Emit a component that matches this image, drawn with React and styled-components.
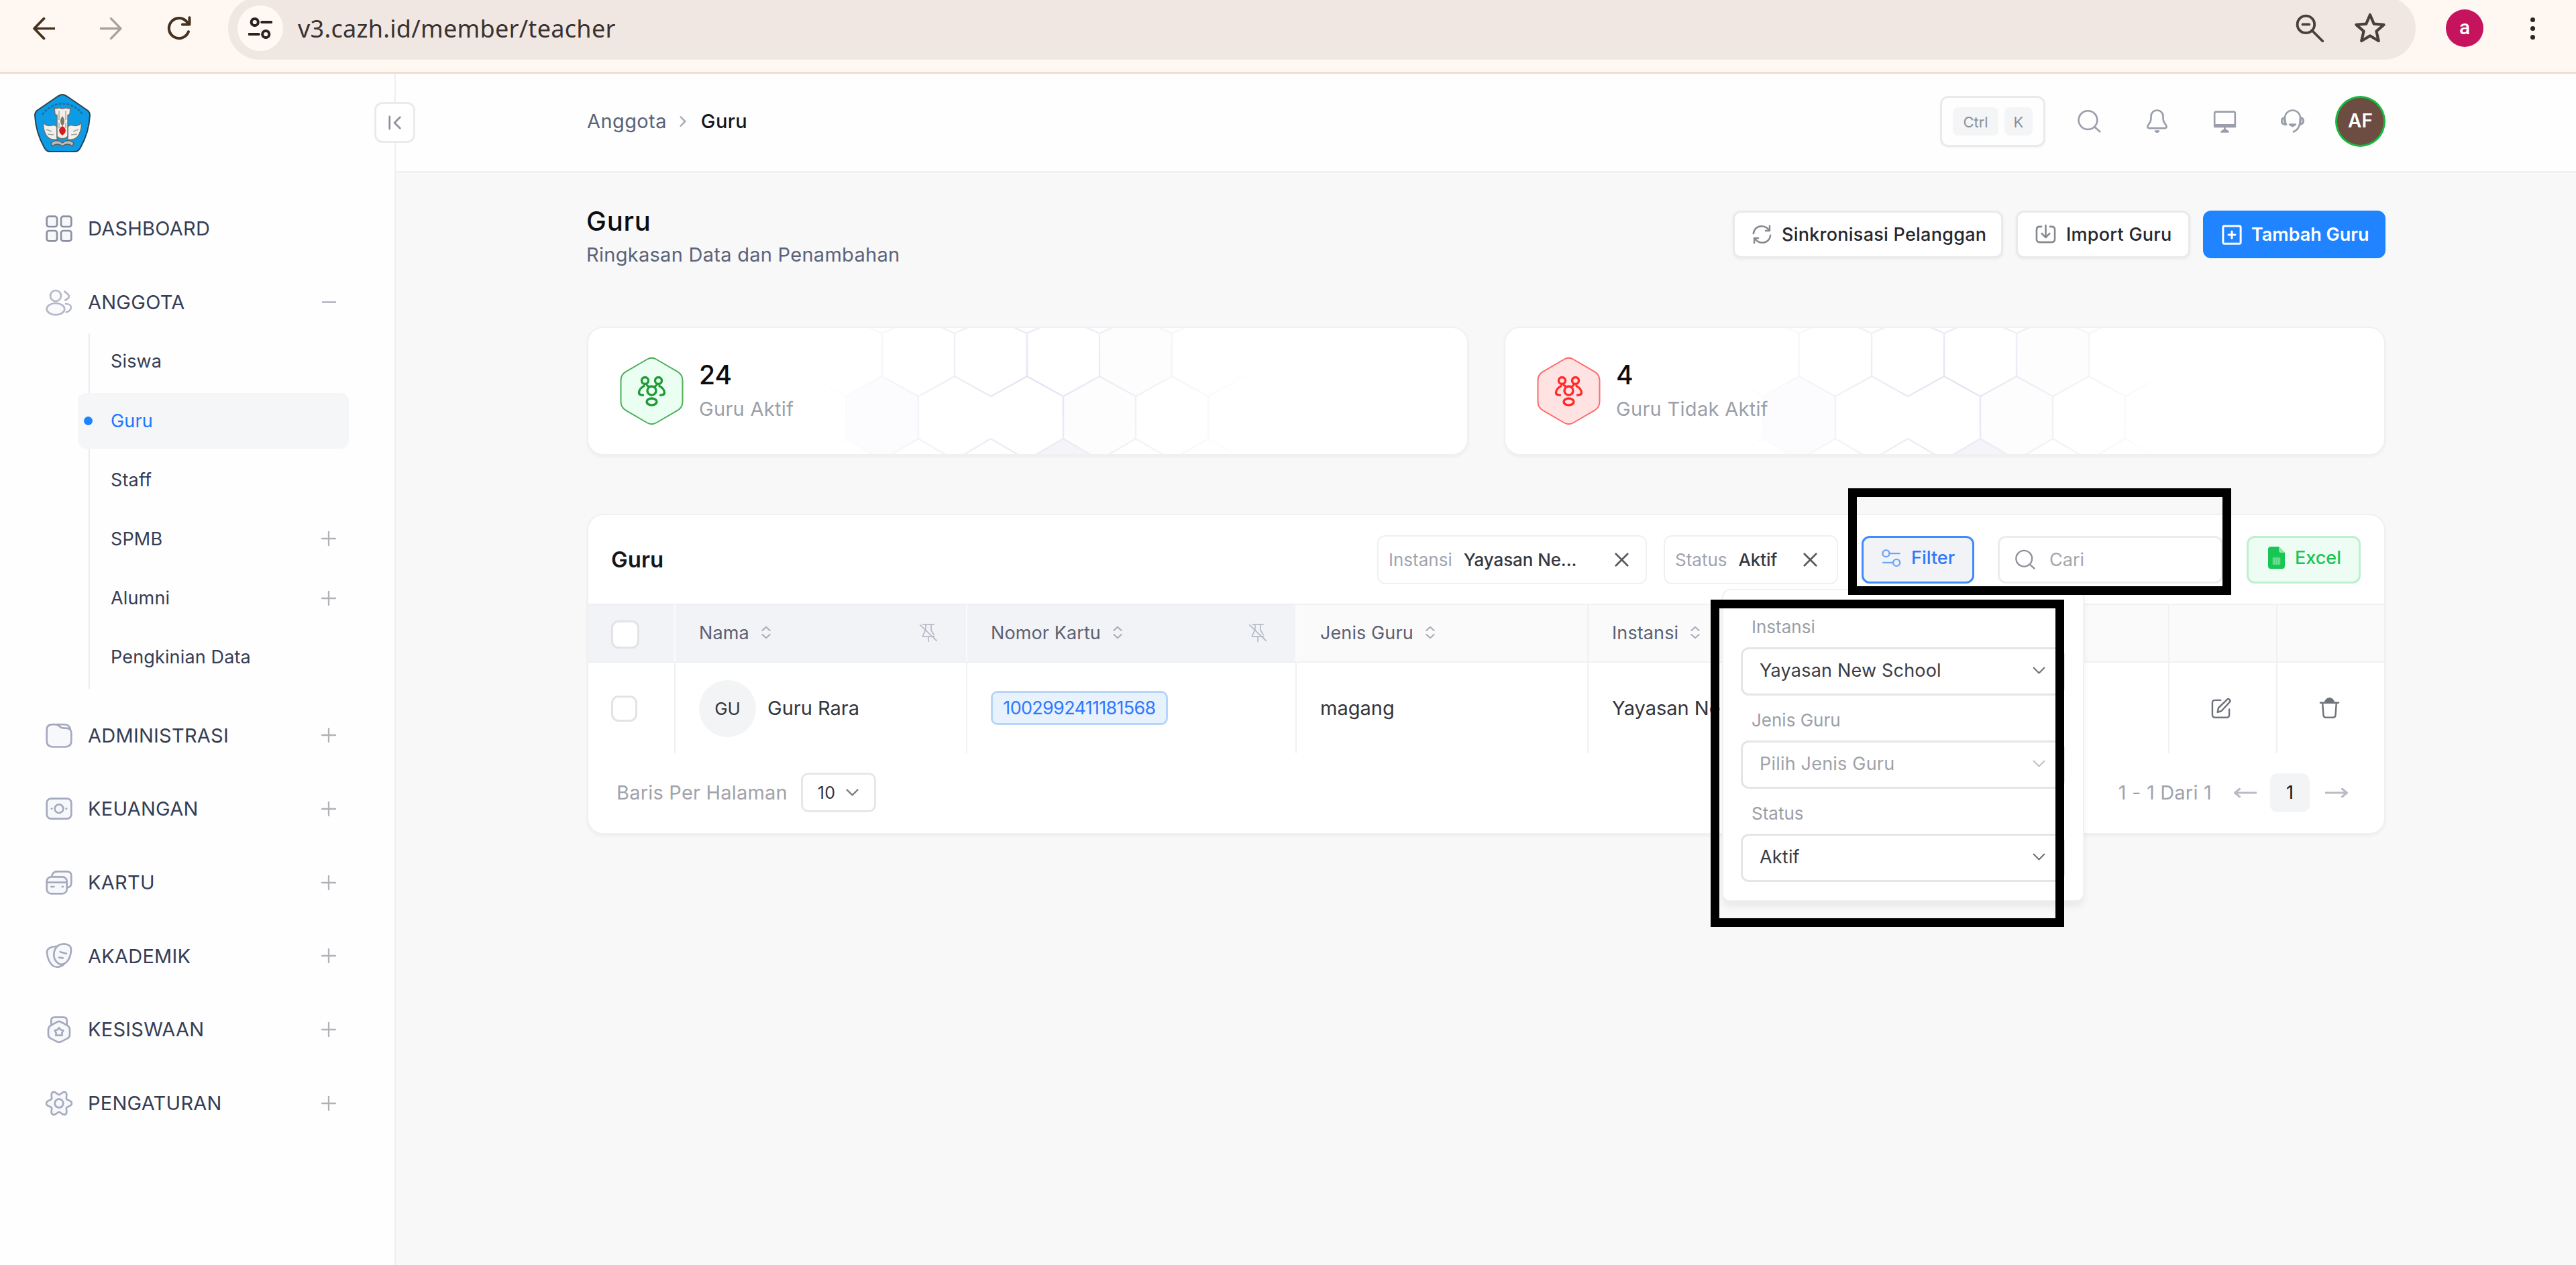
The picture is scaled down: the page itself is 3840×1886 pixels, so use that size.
import React from "react";
import styled, { createGlobalStyle } from "styled-components";

/// data
const menuTop = [{ id: 1, label: "DASHBOARD", icon: "dashboard" }];

const subMenu = [
  { id: 1, label: "Siswa" },
  { id: 2, label: "Guru", active: true },
  { id: 3, label: "Staff" },
  { id: 4, label: "SPMB", more: true },
  { id: 5, label: "Alumni", more: true },
  { id: 6, label: "Pengkinian Data" },
];

const menuBottom = [
  { id: 1, label: "ADMINISTRASI", icon: "folder" },
  { id: 2, label: "KEUANGAN", icon: "money" },
  { id: 3, label: "KARTU", icon: "cards" },
  { id: 4, label: "AKADEMIK", icon: "masks" },
  { id: 5, label: "KESISWAAN", icon: "badge" },
  { id: 6, label: "PENGATURAN", icon: "gear" },
];

const stats = [
  { id: 1, value: "24", label: "Guru Aktif", fill: "#eafff1", line: "#4fae5c", ink: "#1f9a34" },
  { id: 2, value: "4", label: "Guru Tidak Aktif", fill: "#ffe2e2", line: "#ff6b6b", ink: "#ff2a2a" },
];

const filters = [
  { id: 1, label: "Instansi", value: "Yayasan New School" },
  { id: 2, label: "Jenis Guru", value: "Pilih Jenis Guru", empty: true },
  { id: 3, label: "Status", value: "Aktif" },
];

const tools = ["search", "bell", "monitor", "headset"];

// six rounded teeth, one of them pointing straight to the right
function gearPath() {
  const points = [];
  for (let i = 0; i < 72; i++) {
    const a = (i / 72) * Math.PI * 2;
    const r = 9.6 + 1.9 * Math.cos(6 * a);
    points.push(`${(12 + r * Math.cos(a)).toFixed(2)} ${(12 + r * Math.sin(a)).toFixed(2)}`);
  }
  return `M${points.join("L")}z`;
}

/// icons
const shapes = {
  dashboard: (
    <>
      <rect x="1" y="1" width="9.2" height="9.2" rx="2" />
      <rect x="13.8" y="1" width="9.2" height="9.2" rx="2" />
      <rect x="1" y="13.8" width="9.2" height="9.2" rx="2" />
      <rect x="13.8" y="13.8" width="9.2" height="9.2" rx="2" />
    </>
  ),
  people: (
    <>
      <circle cx="9" cy="6" r="4.8" />
      <ellipse cx="9" cy="17.800" rx="8" ry="5.200" />
      <path d="M17 2.200c2.600 2 4 3.600 4 4.300s-1.400 2.300-3.500 3.500" fill="none" />
      <path d="M18 13.200c2.700 0 4.800 1.200 4.800 3.200s-2 3.700-4.300 4.300" fill="none" />
    </>
  ),
  folder: (
    <>
      <path d="M1 7.500C1 4 2.500 2.500 6 2.500h2.500c2 0 2.800.5 4 1.700 1.200 1.200 2.200 1.600 4 1.600h2c3 0 4.500 1.600 4.500 4.600v6.600c0 3.700-1.800 5.500-5.500 5.500h-11C2.800 22.500 1 20.700 1 17z" />
      <path d="M10 2.500h6.500c3 0 4.800 1.200 5.500 3.800" fill="none" />
    </>
  ),
  money: (
    <>
      <rect x="1" y="2.800" width="22" height="18" rx="3.800" />
      <circle cx="12" cy="11.800" r="3.800" />
      <path d="M5.300 11.800h.3M18.400 11.800h.3" />
    </>
  ),
  cards: (
    <>
      <path d="M5.500 6.500C6 3.300 7.500 2 10 2h9c2.600 0 4 1.400 4 3.800v6.400c0 2.600-1.500 4.200-4 4.200" />
      <rect x="1" y="6.800" width="18" height="15" rx="4" />
      <path d="M1 11.800h18M5 15.600h2.500M14.800 15.600h.8" />
    </>
  ),
  masks: (
    <>
      <path d="M9 3.600C4 4 .8 5.800 1.200 9.200 1.700 14 3.300 18 6 20.500c2.700 2.400 7.300 2 10.800-1.300" />
      <path d="M10.500 3.300c1.500-1.600 5.500-2.300 8.500-1.500 3 .8 4 2.300 3.800 5-.2 4.700-1.500 8.400-4.500 11.200-2.600 2.300-6 2.200-8.500-.5-2.400-2.500-2.900-5.500-2.100-9.200.4-2 1.300-3.500 2.800-5z" />
      <path d="m13 8.500 5.500 1.500M12 13.500l3.500.5" />
    </>
  ),
  badge: (
    <>
      <path d="M5 7.500V3.800C5 2 6 1 7.800 1h8.400C18 1 19 2 19 3.800v3.700" />
      <path d="M10 5.300c1.400-.8 2.600-.8 4 0l5.600 3.200c1.300.8 2 1.800 2 3.300v4.700c0 1.500-.7 2.600-2 3.400L14 22.700c-1.400.8-2.600.8-4 0l-5.600-2.800c-1.300-.8-2-1.900-2-3.400v-4.700c0-1.500.7-2.500 2-3.300z" />
      <path d="m12 10.500 1.500 1.700 2.300.6-1.200 2.200.2 2.200H9.200l.2-2.200-1.200-2.200 2.300-.6z" />
    </>
  ),
  gear: (
    <>
      <path d={gearPath()} />
      <circle cx="12" cy="12" r="3.800" />
    </>
  ),
  plus: <path d="M12 1v22M1 12h22" />,
  minus: <path d="M1 12h22" />,
  search: (
    <>
      <circle cx="10.600" cy="11" r="9.500" />
      <path d="m18 18.500 4.800 4.300" />
    </>
  ),
  bell: (
    <>
      <path d="M12 1c-3.700 0-6.200 2.700-6.200 6.200v2.400c0 1.300-.4 2.600-1.100 3.800L2.700 16.500c-.9 1.500-.2 2.800 1.500 2.800h15.600c1.700 0 2.400-1.300 1.500-2.800l-2-3.100c-.7-1.200-1.100-2.500-1.100-3.800V7.200C18.200 3.700 15.700 1 12 1z" />
      <path d="M10.300 22.400h3.400l-1.700.9z" fill="currentColor" />
    </>
  ),
  monitor: (
    <>
      <path d="M1.500 15.500V4c0-1 .5-1.500 1.500-1.500h18c1 0 1.500.5 1.500 1.500v11.500" />
      <path d="M1.500 16h21v1.800h-21z" fill="currentColor" />
      <path d="M12 18v4M8.500 23h7l-2-1.500h-3z" fill="currentColor" />
    </>
  ),
  headset: (
    <>
      <path d="M5.500 15.500C4.300 13.500 4 11.500 4 9.500 4 4.500 7.500 1 12 1s8 3.500 8 8.500c0 7-2 11.500-7 13.500" />
      <path d="M4 8.500c-2 .3-3.200 1.700-3.200 3.700s1.500 3.300 4 3.500zM20 8.500c2 .3 3.200 1.700 3.200 3.500s-1.300 3-3.700 3.500z" fill="currentColor" fillOpacity=".5" />
      <path d="M9 15.500h6l-3 1.800z" fill="currentColor" />
    </>
  ),
  sync: (
    <>
      <path d="M1.500 11C2 5.500 6.200 1.800 11.500 1.800c4 0 7.300 2 9.500 5.200M22.500 13c-.5 5.500-4.700 9.200-10 9.200-4 0-7.300-2-9.500-5.200" />
      <path d="M21.500 1.500V7.500h-5M2.500 22.500v-6h5" />
    </>
  ),
  download: (
    <>
      <path d="M7 3H5C2.600 3 1.500 4.200 1.500 6.500v11C1.500 20 2.600 21 5 21h14c2.400 0 3.500-1 3.500-3.500v-11C22.500 4.200 21.400 3 19 3h-2" />
      <path d="M12 1.500v13.500M7.500 11l4.500 4.500 4.500-4.500" />
    </>
  ),
  addBox: (
    <>
      <rect x="1.500" y="1.500" width="21" height="21" rx="1.500" />
      <path d="M12 8v8M8 12h8" />
    </>
  ),
  sliders: (
    <>
      <circle cx="6" cy="6.500" r="4" />
      <circle cx="18.500" cy="17.500" r="4" />
      <path d="M10 6.500h12M2.500 17.500h12" />
    </>
  ),
  close: <path d="M2 2l20 20M22 2 2 22" />,
  sort: <path d="m4.500 8 7.500-7 7.500 7M4.500 16l7.500 7 7.500-7" />,
  pinOff: (
    <>
      <path d="M5 1.500h14M8.500 2v6L4.500 17h15M15.500 2v7l3.500 6M12 17v6.500M1.500 2.500l21 20" />
    </>
  ),
  chevron: <path d="m2 7 10 10L22 7" />,
  right: <path d="m8 4 8 8-8 8" />,
  edit: (
    <>
      <path d="M11 3H4.500C2.500 3 1.500 4 1.500 6v14c0 2 1 3 3 3h13.500c2 0 3-1 3-3v-6.500" />
      <path d="M19 1.800c1.200-.8 3.700 1.200 3 2.800L12 15.500l-4.500 1.500 1-5z" />
    </>
  ),
  trash: (
    <>
      <path d="M1.500 6h21M4 6l1 14c.1 2 1 3 3 3h8c2 0 2.900-1 3-3l1-14" />
      <path d="M7 5.500C8 2.500 9.500 1 12 1s4 1.500 5 4.500z" fill="currentColor" />
    </>
  ),
  arrowLeft: <path d="M1 12h23M6 8l-5 4 5 4" />,
  arrowRight: <path d="M0 12h23M18 8l5 4-5 4" />,
  collapse: <path d="M3 2v20M20 3l-9 9 9 9" />,
  back: <path d="M23.500 12H2M12 1.200 1.500 12 12 22.800" />,
  forward: <path d="M.5 12H22M12 1.200 22.500 12 12 22.800" />,
  reload: (
    <>
      <path d="M21.300 15.500A10 10 0 1 1 19 5l3 2.800" />
      <path d="M22.300 1.500v6.800h-7" />
    </>
  ),
  site: (
    <>
      <circle cx="6.500" cy="6" r="3.400" />
      <circle cx="17.500" cy="18" r="3.400" />
      <path d="M13.500 6H23M1 18h9.500" />
    </>
  ),
  zoomOut: (
    <>
      <circle cx="8.800" cy="8.800" r="7.300" />
      <path d="m14 14 9 9M6 8.800h5.600" />
    </>
  ),
  star: <path d="m12 2 2.900 6.800 7.400.6-5.600 4.900 1.700 7.200L12 17.700l-6.400 3.800 1.700-7.200-5.600-4.900 7.400-.6z" />,
};

function Icon({ name, size = 34, weight = 1.5, color, tint }) {
  return (
    <IconSvg
      viewBox="0 0 24 24"
      width={size}
      height={size}
      fill={tint || "none"}
      stroke="currentColor"
      strokeWidth={weight}
      strokeLinecap="round"
      strokeLinejoin="round"
      $color={color}
    >
      {shapes[name]}
    </IconSvg>
  );
}

function SchoolLogo() {
  return (
    <svg width="84" height="87" viewBox="0 0 84 87">
      <path
        d="M42 1c3 0 6 2 9 4l29 20c2 2 3 4 3 7-1 18-6 34-14 48-2 4-4 6-8 6H23c-4 0-6-2-8-6C7 66 2 50 1 32c0-3 1-5 3-7L33 5c3-2 6-4 9-4z"
        fill="#0d9be6"
        stroke="#2b4350"
        strokeWidth="2"
      />
      <path d="M12 31C28 9 56 9 73 31" fill="none" stroke="#1c6f9f" strokeWidth="2.500" strokeDasharray="4 2" />
      {/* wings */}
      <path
        d="M14 42c2 5 7 6 12 5 4-1 7 0 8 3v18c-8 1-14-2-17-8-3-6-4-12-3-18zM70 42c-2 5-7 6-12 5-4-1-7 0-8 3v18c8 1 14-2 17-8 3-6 4-12 3-18z"
        fill="#f3f1ec"
        stroke="#6a7472"
        strokeWidth="1.500"
      />
      <path d="M18 53l8 3M20 60l9 1M66 53l-8 3M64 60l-9 1" stroke="#a5a49a" strokeWidth="1.500" />
      <path
        d="M30 21c3 2 5-1 8 0s5 1 8 0 5 2 8 0l-1 9-3 2v31c-4 5-12 5-16 0V32l-3-2z"
        fill="#f1efe8"
        stroke="#6a7472"
        strokeWidth="1.500"
      />
      <path d="M37 25v14M47 25v14M37 43v8M47 43v8" stroke="#aaa798" strokeWidth="1.500" fill="none" />
      <path d="M42 33c4 5 4 10 0 15-4-5-4-10 0-15z" fill="#7d786a" />
      <path d="M42 48c6 3 7 9 0 14-7-5-6-11 0-14z" fill="#cf1f22" />
      <path d="M25 73c6-5 12-4 17 0 5-4 11-5 17 0l-2 5c-5-4-10-4-15 0-5-4-10-4-15 0z" fill="#b9bdba" stroke="#55605f" strokeWidth="1.500" />
    </svg>
  );
}

function HexBadge({ fill, line, ink }) {
  return (
    <svg width="95" height="102" viewBox="0 0 95 102">
      <path
        d="M41 3.500c4-2.300 9-2.300 13 0l32 18.700c4.500 2.600 7.500 7.600 7.500 13v31.600c0 5.400-3 10.400-7.500 13L54 98.500c-4 2.300-9 2.300-13 0L9 79.800c-4.500-2.600-7.500-7.600-7.500-13V35.200c0-5.400 3-10.400 7.500-13z"
        fill={fill}
        stroke={line}
        strokeWidth="2"
      />
      <g fill="none" stroke={ink} strokeWidth="3.400" strokeLinecap="round">
        <circle cx="37.500" cy="35.500" r="5" />
        <circle cx="57.500" cy="35.500" r="5" />
        <path d="M36 43.500c-4 2-7.500 6-7.500 10 0 2 2 3.500 6 3.500M59 43.500c4 2 7.500 6 7.500 10 0 2-2 3.500-6 3.500M40.500 42.500l2 1.500M54.500 42.500l-2 1.500" />
        <circle cx="47.500" cy="50.500" r="6.500" />
        <ellipse cx="47.500" cy="67" rx="7.500" ry="5" />
      </g>
    </svg>
  );
}

// honeycomb behind the statistic cards, it fades out towards the sides
function Honeycomb({ id }) {
  const pitch = 108;
  let lines = "";
  [-1, 0, 1, 2, 3, 4, 5].forEach((n) => {
    const x = 438 + n * pitch;
    lines += `M${x} 8V72l54 30M${x} 72l-54 30M${x} 8l-22-10M${x} 8l22-10`;
    if (n !== 1) lines += `M${x + 54} 102v63`;
    lines += `M${x + 54} 165l-46 27M${x + 54} 165l46 27`;
  });
  return (
    <Pattern viewBox="0 0 1310 188" width="1310" height="188">
      <defs>
        <radialGradient id={id} gradientUnits="userSpaceOnUse" cx="665" cy="90" r="330">
          <stop offset="0" stopColor="#e4e2f3" />
          <stop offset=".4" stopColor="#efeef6" />
          <stop offset=".75" stopColor="#f8f8fb" />
          <stop offset="1" stopColor="#fff" />
        </radialGradient>
      </defs>
      <path d="M384 102l54-30 54 30v63l-40 23h-28l-40-23z" fill="#fcfcfe" />
      <path d="M762 8l22-10h64l22 10v64l-54 30-54-30z" fill="#fdfdfe" />
      <path d="M708 102l54-30 54 30v63l-40 23h-28l-40-23z" fill="#fdfdfe" />
      <path d="M708 165l40 23h-80z" fill="#f4f4f9" />
      <path d={lines} fill="none" stroke={`url(#${id})`} strokeWidth="2.400" />
    </Pattern>
  );
}

function HeadCell({ label, pin, dark }) {
  return (
    <Th $dark={dark}>
      {label}
      <Icon name="sort" size={18} weight={2.8} color="#a9adb8" />
      {pin && (
        <PinSlot>
          <Icon name="pinOff" size={28} weight={1.5} color="#b9bcc6" />
        </PinSlot>
      )}
    </Th>
  );
}

//
export default function App() {
  return (
    <Page>
      <GlobalStyle />

      {/* Browser bar */}
      <ChromeBar>
        <ChromeNav>
          <Icon name="back" size={33} weight={2.7} color="#45321f" />
          <Icon name="forward" size={33} weight={2.4} color="#a9a19b" />
          <Icon name="reload" size={36} weight={2.7} color="#45321f" />
        </ChromeNav>
        <UrlPill>
          <SiteButton>
            <Icon name="site" size={36} weight={2.7} color="#2b2320" />
          </SiteButton>
          <Url>v3.cazh.id/member/teacher</Url>
          <Icon name="zoomOut" size={42} weight={2.2} color="#4a403a" />
          <StarSlot>
            <Icon name="star" size={48} weight={2.1} color="#4a403a" />
          </StarSlot>
        </UrlPill>
        <Profile>a</Profile>
        <Dots>
          <i />
          <i />
          <i />
        </Dots>
      </ChromeBar>

      <Body>
        {/* Sidebar */}
        <Sidebar>
          <Collapse>
            <Icon name="collapse" size={22} weight={2.9} color="#8d9099" />
          </Collapse>
          <LogoArea>
            <SchoolLogo />
          </LogoArea>
          {menuTop.map((item) => (
            <NavItem key={item.id}>
              <Icon name={item.icon} size={40} weight={1.6} color="#8b90a3" tint="#f7f8fa" />
              <NavLabel>{item.label}</NavLabel>
            </NavItem>
          ))}
          <NavItem>
            <Icon name="people" size={40} weight={1.6} color="#b3b7c8" tint="#f9fafc" />
            <NavLabel>ANGGOTA</NavLabel>
            <Icon name="minus" size={21} weight={3} color="#aeb2bd" />
          </NavItem>
          <SubList>
            {subMenu.map((item) => (
              <SubItem key={item.id} $active={item.active}>
                <Dot $active={item.active} />
                <NavLabel>{item.label}</NavLabel>
                {item.more && <Icon name="plus" size={22} weight={2.5} color="#b0b2b8" />}
              </SubItem>
            ))}
          </SubList>
          {menuBottom.map((item) => (
            <NavItem key={item.id}>
              <Icon name={item.icon} size={40} weight={1.6} color="#a5a9bd" tint="#f7f8fb" />
              <NavLabel>{item.label}</NavLabel>
              <Icon name="plus" size={22} weight={2.5} color="#b0b2b8" />
            </NavItem>
          ))}
        </Sidebar>

        <Main>
          {/* Top bar */}
          <TopBar>
            <Crumbs>
              <span>Anggota</span>
              <Icon name="right" size={20} weight={3} color="#a9adb8" />
              <b>Guru</b>
            </Crumbs>
            <Shortcut>
              <Key $width={68}>Ctrl</Key>
              <Key $width={42}>K</Key>
            </Shortcut>
            <Tools>
              {tools.map((name) => (
                <Tool key={name}>
                  <Icon name={name} size={35} weight={1.8} color="#9a9eaa" />
                </Tool>
              ))}
            </Tools>
            <UserAvatar>AF</UserAvatar>
          </TopBar>

          <Content>
            <PageHead>
              <Titles>
                <h1>Guru</h1>
                <p>Ringkasan Data dan Penambahan</p>
              </Titles>
              <Actions>
                <Button $width={403}>
                  <Icon name="sync" size={29} weight={2} color="#85888f" />
                  Sinkronisasi Pelanggan
                </Button>
                <Button $width={260}>
                  <Icon name="download" size={31} weight={2} color="#85888f" />
                  Import Guru
                </Button>
                <Button $width={272} $primary>
                  <Icon name="addBox" size={30} weight={2.4} />
                  Tambah Guru
                </Button>
              </Actions>
            </PageHead>

            {/* Statistics */}
            <Stats>
              {stats.map((item) => (
                <StatCard key={item.id}>
                  <Honeycomb id={`comb-${item.id}`} />
                  <HexBadge fill={item.fill} line={item.line} ink={item.ink} />
                  <StatText>
                    <h2>{item.value}</h2>
                    <p>{item.label}</p>
                  </StatText>
                </StatCard>
              ))}
            </Stats>

            {/* Table */}
            <TableCard>
              <Toolbar>
                <h3>Guru</h3>
                <Chip $width={402} $end={25}>
                  <span>Instansi</span>
                  <b>Yayasan Ne...</b>
                  <Icon name="close" size={21} weight={3} color="#55585f" />
                </Chip>
                <Chip $width={260} $end={29}>
                  <span>Status</span>
                  <b>Aktif</b>
                  <Icon name="close" size={21} weight={3} color="#55585f" />
                </Chip>
                <FilterSlot>
                  <FilterButton>
                    <Icon name="sliders" size={30} weight={1.9} color="#6fa6f8" />
                    Filter
                  </FilterButton>
                  <FilterMenu>
                    {filters.map((item) => (
                      <Field key={item.id}>
                        <label>{item.label}</label>
                        <Select $empty={item.empty}>
                          {item.value}
                          <Icon name="chevron" size={19} weight={2.7} color={item.empty ? "#bfc2c9" : "#6e7178"} />
                        </Select>
                      </Field>
                    ))}
                  </FilterMenu>
                </FilterSlot>
                <SearchBox>
                  <Icon name="search" size={30} weight={1.9} color="#8f929b" />
                  Cari
                </SearchBox>
                <ExcelButton>
                  <svg width="25" height="33" viewBox="0 0 25 33">
                    <path d="M4 0h12l9 9v20c0 2.500-1.500 4-4 4H4c-2.500 0-4-1.500-4-4V4c0-2.500 1.500-4 4-4z" fill="#17c653" />
                    <path d="M16 0l9 9h-6c-2 0-3-1-3-3z" fill="#8fe5ac" />
                    <path d="M7 16h11v11H7zM10.700 16v11M14.300 16v11" fill="#6fdc93" stroke="#3fd071" strokeWidth="1" />
                  </svg>
                  Excel
                </ExcelButton>
              </Toolbar>

              <TableRow $head>
                <Th $dark $check>
                  <Checkbox $size={42} />
                </Th>
                <HeadCell label="Nama" pin dark />
                <HeadCell label="Nomor Kartu" pin dark />
                <HeadCell label="Jenis Guru" />
                <HeadCell label="Instansi" />
                <Th />
                <Th />
              </TableRow>
              <TableRow>
                <Td $check>
                  <Checkbox $size={39} />
                </Td>
                <Td>
                  <Initials>GU</Initials>
                  Guru Rara
                </Td>
                <Td>
                  <CardNumber>1002992411181568</CardNumber>
                </Td>
                <Td>magang</Td>
                <Td>Yayasan Ne</Td>
                <Td $center>
                  <Icon name="edit" size={31} weight={1.9} color="#70737b" />
                </Td>
                <Td $center>
                  <Icon name="trash" size={31} weight={1.9} color="#70737b" />
                </Td>
              </TableRow>

              <Footer>
                <span>Baris Per Halaman</span>
                <PageSize>
                  10
                  <Icon name="chevron" size={19} weight={3} color="#7c7f87" />
                </PageSize>
                <Pager>
                  <span>1 - 1 Dari 1</span>
                  <Icon name="arrowLeft" size={34} weight={2.2} color="#b9bcc4" />
                  <PageNumber>1</PageNumber>
                  <Icon name="arrowRight" size={34} weight={2.2} color="#b9bcc4" />
                </Pager>
              </Footer>
            </TableCard>
          </Content>
        </Main>
      </Body>

      {/* Highlight frames */}
      <Frame $x={2755} $y={728} $w={571} $h={159} />
      <Frame $x={2550} $y={894} $w={527} $h={488} />
    </Page>
  );
}

const GlobalStyle = createGlobalStyle`
  * {
    box-sizing: border-box;
  }
  body {
    margin: 0;
    background: #f8f8f8;
    font-family: Inter, "Liberation Sans", sans-serif;
  }
  h1, h2, h3, p {
    margin: 0;
  }
`;

const IconSvg = styled.svg`
  flex: none;
  display: block;
  color: ${({ $color }) => $color || "inherit"};
`;

const Page = styled.div`
  position: relative;
  display: flex;
  flex-direction: column;
  width: 3840px;
  height: 1886px;
  overflow: hidden;
  color: #26282e;
  font-size: 29px;
`;

const ChromeBar = styled.div`
  display: flex;
  height: 110px;
  overflow: hidden;
  padding-left: 49px;
  background: #fff8f2;
  border-bottom: 3px solid #f0ddcf;
`;

const ChromeNav = styled.div`
  display: flex;
  justify-content: space-between;
  align-items: center;
  width: 236px;
  height: 84px;
  margin-right: 55px;
`;

const UrlPill = styled.div`
  display: flex;
  align-items: center;
  width: 3261px;
  height: 94px;
  margin-top: -5px;
  padding: 0 44px 0 14px;
  border-radius: 47px;
  background: #f1e7e2;
`;

const SiteButton = styled.div`
  display: flex;
  align-items: center;
  justify-content: center;
  width: 68px;
  height: 68px;
  margin-right: 22px;
  border-radius: 50%;
  background: #fff8f3;
`;

const Url = styled.div`
  flex: 1;
  color: #3a3230;
  font-family: "Noto Sans", "Open Sans", sans-serif;
  font-size: 36px;
  letter-spacing: 0.3px;
`;

const StarSlot = styled.div`
  margin-left: 45px;
`;

const Profile = styled.div`
  display: flex;
  align-items: center;
  justify-content: center;
  width: 56px;
  height: 56px;
  margin: 14px 0 0 45px;
  padding-bottom: 3px;
  border-radius: 50%;
  background: #c5145d;
  color: #fff;
  font-family: Roboto, sans-serif;
  font-size: 30px;
  font-weight: 500;
`;

const Dots = styled.div`
  display: flex;
  flex-direction: column;
  gap: 6px;
  margin: 26px 0 0 70px;
  i {
    width: 7px;
    height: 7px;
    border-radius: 50%;
    background: #2f2620;
  }
`;

const Body = styled.div`
  display: flex;
  flex: 1;
`;

const Sidebar = styled.aside`
  position: relative;
  width: 590px;
  background: #fefefe;
  border-right: 2px solid #efeff1;
`;

const Collapse = styled.div`
  position: absolute;
  top: 42px;
  right: -31px;
  display: flex;
  align-items: center;
  justify-content: center;
  width: 61px;
  height: 61px;
  border: 3px solid #ebebed;
  border-radius: 12px;
  background: #fff;
`;

const LogoArea = styled.div`
  height: 176px;
  padding: 30px 0 0 51px;
`;

const NavItem = styled.div`
  display: flex;
  align-items: center;
  gap: 23px;
  height: 109.7px;
  padding: 0 87px 0 68px;
  color: #353d55;
  font-size: 29px;
  letter-spacing: 0.25px;
`;

const NavLabel = styled.span`
  flex: 1;
`;

const SubList = styled.div`
  height: 530px;
  margin: -9px 0 14px 132px;
  border-left: 2px solid #ececef;
`;

const SubItem = styled.div`
  display: flex;
  align-items: center;
  width: 404px;
  height: 83px;
  margin: 1px 0 5.2px -18px;
  padding: 0 19px 0 9px;
  border-radius: 12px;
  background: ${({ $active }) => ($active ? "#f5f6f8" : "transparent")};
  color: ${({ $active }) => ($active ? "#1b78ff" : "#353d55")};
  font-size: 27px;
  letter-spacing: 0.15px;
`;

const Dot = styled.i`
  width: 13px;
  height: 13px;
  margin-right: 27px;
  border-radius: 50%;
  background: ${({ $active }) => ($active ? "#1b84ff" : "transparent")};
`;

const Main = styled.main`
  flex: 1;
`;

const TopBar = styled.header`
  display: flex;
  align-items: center;
  height: 148px;
  padding: 0 284px 4px 285px;
  background: #fefefe;
  border-bottom: 3px solid #f1f1f2;
`;

const Crumbs = styled.div`
  display: flex;
  align-items: center;
  flex: 1;
  gap: 14px;
  color: #5b6379;
  letter-spacing: 0.4px;
  b {
    margin-left: 3px;
    color: #15171c;
    font-weight: 500;
  }
`;

const Shortcut = styled.div`
  display: flex;
  align-items: center;
  justify-content: center;
  gap: 9px;
  width: 157px;
  height: 76px;
  border: 3px solid #e9eaec;
  border-radius: 12px;
  box-shadow: 0 2px 3px rgba(0, 0, 0, 0.04);
`;

const Key = styled.span`
  display: flex;
  align-items: center;
  justify-content: center;
  width: ${({ $width }) => $width}px;
  height: 42px;
  padding-top: 3px;
  border-radius: 8px;
  background: #f4f5f6;
  color: #8b8f99;
  font-size: 22px;
`;

const Tools = styled.div`
  display: flex;
  margin: 0 13px 0 15px;
`;

const Tool = styled.div`
  display: flex;
  justify-content: center;
  width: 101px;
`;

const UserAvatar = styled.div`
  display: flex;
  align-items: center;
  justify-content: center;
  width: 75px;
  height: 76px;
  padding-bottom: 2px;
  border: 3px solid #17b83f;
  border-radius: 50%;
  background: #6d4c41;
  color: #fff;
  font-size: 28px;
  font-weight: 600;
`;

const Content = styled.div`
  padding: 0 284px 0 285px;
`;

const PageHead = styled.div`
  display: flex;
  align-items: flex-start;
  justify-content: space-between;
  height: 229px;
  padding-top: 49px;
`;

const Titles = styled.div`
  h1 {
    margin-left: -1px;
    color: #0b0c10;
    font-size: 40px;
    font-weight: 500;
    letter-spacing: 0.8px;
    line-height: 46px;
  }
  p {
    margin: 7px 0 0 -1px;
    color: #5b6379;
    font-size: 29px;
    letter-spacing: 0.28px;
    line-height: 40px;
  }
`;

const Actions = styled.div`
  display: flex;
  gap: 19px;
  margin-top: 7px;
`;

const Button = styled.button`
  display: flex;
  align-items: center;
  gap: ${({ $primary }) => ($primary ? 14 : 15)}px;
  width: ${({ $width }) => $width}px;
  height: 71px;
  padding: 0 0 0 ${({ $primary }) => ($primary ? 25 : 26)}px;
  border: 3px solid ${({ $primary }) => ($primary ? "#1b84ff" : "#e9eaec")};
  border-radius: 12px;
  background: ${({ $primary }) => ($primary ? "#2083ff" : "#fff")};
  box-shadow: ${({ $primary }) => ($primary ? "none" : "0 2px 4px rgba(0, 0, 0, 0.05)")};
  color: ${({ $primary }) => ($primary ? "#fff" : "#26282e")};
  font-family: inherit;
  font-size: 27px;
  font-weight: ${({ $primary }) => ($primary ? 600 : 500)};
  letter-spacing: ${({ $primary }) => ($primary ? 0 : 0.25)}px;
  white-space: nowrap;
`;

const Stats = styled.div`
  display: grid;
  grid-template-columns: 1fr 1fr;
  gap: 53px;
`;

const StatCard = styled.div`
  position: relative;
  display: flex;
  align-items: center;
  gap: 23px;
  height: 192px;
  padding-left: 47px;
  border: 2px solid #f0f0f1;
  border-radius: 24px;
  background: #fff;
  box-shadow: 0 3px 5px rgba(0, 0, 0, 0.04);
  overflow: hidden;
  > svg,
  > div {
    position: relative;
  }
`;

const Pattern = styled.svg`
  && {
    position: absolute;
    top: 0;
    left: 0;
  }
`;

const StatText = styled.div`
  padding-top: 3px;
  h2 {
    color: #0b0c10;
    font-size: 39px;
    font-weight: 500;
    line-height: 50px;
  }
  p {
    color: #9b9fa9;
    font-size: 29px;
    letter-spacing: 0.3px;
    line-height: 52px;
  }
`;

const TableCard = styled.section`
  height: 478px;
  margin-top: 87px;
  border: 2px solid #f0f0f1;
  border-radius: 24px;
  background: #fff;
  box-shadow: 0 3px 5px rgba(0, 0, 0, 0.04);
`;

const Toolbar = styled.div`
  display: flex;
  align-items: center;
  height: 132px;
  padding: 0 35px 0 34px;
  h3 {
    flex: 1;
    color: #15171c;
    font-size: 33px;
    font-weight: 600;
  }
`;

const Chip = styled.div`
  display: flex;
  align-items: center;
  width: ${({ $width }) => $width}px;
  height: 73px;
  margin-right: 25px;
  padding: 0 ${({ $end }) => $end}px 0 15px;
  border: 2px solid #f0f0f2;
  border-radius: 12px;
  color: #a0a3af;
  font-size: 26px;
  b {
    flex: 1;
    margin-left: 17px;
    color: #363942;
    font-weight: 500;
    letter-spacing: -0.1px;
  }
`;

const FilterSlot = styled.div`
  position: relative;
  margin: 0 35px 0 10px;
`;

const FilterButton = styled.div`
  display: flex;
  align-items: center;
  gap: 15px;
  width: 168px;
  height: 71px;
  padding: 0 0 5px 26px;
  border: 3px solid #3f8bff;
  border-radius: 12px;
  background: #f2f3f6;
  color: #2f78ff;
  font-size: 27px;
  font-weight: 500;
`;

const FilterMenu = styled.div`
  position: absolute;
  z-index: 2;
  top: 79px;
  left: -208px;
  display: flex;
  flex-direction: column;
  gap: 20px;
  width: 540px;
  height: 466px;
  padding: 38px 27px 0 26px;
  border: 2px solid #f1f1f2;
  border-radius: 12px;
  background: #fff;
  box-shadow: 0 8px 10px rgba(0, 0, 0, 0.06);
`;

const Field = styled.div`
  label {
    display: block;
    height: 47px;
    padding-left: 16px;
    color: #9b9ea6;
    font-size: 26px;
    line-height: 34px;
  }
`;

const Select = styled.div`
  display: flex;
  align-items: center;
  justify-content: space-between;
  height: 72px;
  padding: 0 26px 2px 25px;
  border: 3px solid #e4e5e7;
  border-radius: 12px;
  color: ${({ $empty }) => ($empty ? "#a0a2aa" : "#3a3c43")};
  font-size: 27px;
  letter-spacing: 0.2px;
`;

const SearchBox = styled.div`
  display: flex;
  align-items: center;
  gap: 21px;
  width: 336px;
  height: 71px;
  margin-right: 35px;
  padding-left: 23px;
  border: 3px solid #ebecee;
  border-radius: 12px;
  color: #a3a6ae;
  font-size: 27px;
`;

const ExcelButton = styled.div`
  display: flex;
  align-items: center;
  gap: 15px;
  width: 170px;
  height: 71px;
  padding: 0 0 5px 29px;
  border: 3px solid #bdf0cd;
  border-radius: 12px;
  background: #eefdf3;
  color: #17c653;
  font-size: 27px;
  font-weight: 500;
`;

const TableRow = styled.div`
  display: grid;
  grid-template-columns: 130px 435px 491px 435px 866px 161px 1fr;
  height: ${({ $head }) => ($head ? 88 : 135)}px;
`;

const Th = styled.div`
  display: flex;
  align-items: center;
  gap: 16px;
  padding: ${({ $check }) => ($check ? "3px 0 0 34px" : "0 42px 2px 35px")};
  border: solid ${({ $dark }) => ($dark ? "#eeeff2" : "#f1f1f3")};
  border-width: 2px 0;
  border-right: 2px solid ${({ $dark }) => ($dark ? "#fbfbfc" : "#f1f1f3")};
  background: ${({ $dark }) => ($dark ? "#f2f3f6" : "#fafafb")};
  color: #5b6172;
  font-size: 27px;
  letter-spacing: 0.1px;
  &:last-child {
    border-right: 0;
  }
`;

const PinSlot = styled.div`
  margin-left: auto;
`;

const Td = styled.div`
  display: flex;
  align-items: center;
  justify-content: ${({ $center }) => ($center ? "center" : "flex-start")};
  padding: ${({ $check, $center }) => ($center ? "0 5px 0 0" : $check ? "2px 0 0 34px" : "0 0 0 35px")};
  border-right: 2px solid #f1f1f3;
  color: #33353c;
  font-size: 29px;
  white-space: nowrap;
  &:last-child {
    border-right: 0;
  }
`;

const Checkbox = styled.div`
  width: ${({ $size }) => $size}px;
  height: ${({ $size }) => $size}px;
  border: 3px solid #e1e3e7;
  border-radius: 11px;
  background: #fff;
`;

const Initials = styled.div`
  display: flex;
  align-items: center;
  justify-content: center;
  width: 85px;
  height: 85px;
  margin: 2px 17px 0 0;
  border-radius: 50%;
  background: #f3f4f5;
  font-size: 26px;
`;

const CardNumber = styled.div`
  display: flex;
  align-items: center;
  justify-content: center;
  width: 264px;
  height: 51px;
  padding-bottom: 1px;
  border: 3px solid #b7d5fb;
  border-radius: 10px;
  background: #e8f2fd;
  color: #2f78ff;
  font-size: 27px;
  letter-spacing: -0.7px;
`;

const Footer = styled.div`
  display: flex;
  align-items: center;
  height: 117px;
  padding: 0 54px 0 42px;
  color: #a0a3ab;
  font-size: 29px;
  letter-spacing: 0.2px;
`;

const PageSize = styled.div`
  display: flex;
  align-items: center;
  gap: 16px;
  width: 112px;
  height: 59px;
  margin-left: 20px;
  padding-left: 22px;
  border: 3px solid #e6e7e9;
  border-radius: 11px;
  color: #33353c;
  font-size: 25px;
`;

const Pager = styled.div`
  display: flex;
  align-items: center;
  margin-left: auto;
  span {
    margin-right: 33px;
  }
`;

const PageNumber = styled.div`
  display: flex;
  align-items: center;
  justify-content: center;
  width: 59px;
  height: 58px;
  margin: 0 23px 0 20px;
  border-radius: 11px;
  background: #f3f4f6;
  color: #15171c;
  font-size: 27px;
`;

const Frame = styled.div`
  position: absolute;
  z-index: 5;
  top: ${({ $y }) => $y}px;
  left: ${({ $x }) => $x}px;
  width: ${({ $w }) => $w}px;
  height: ${({ $h }) => $h}px;
  border: 13px solid #000;
`;
